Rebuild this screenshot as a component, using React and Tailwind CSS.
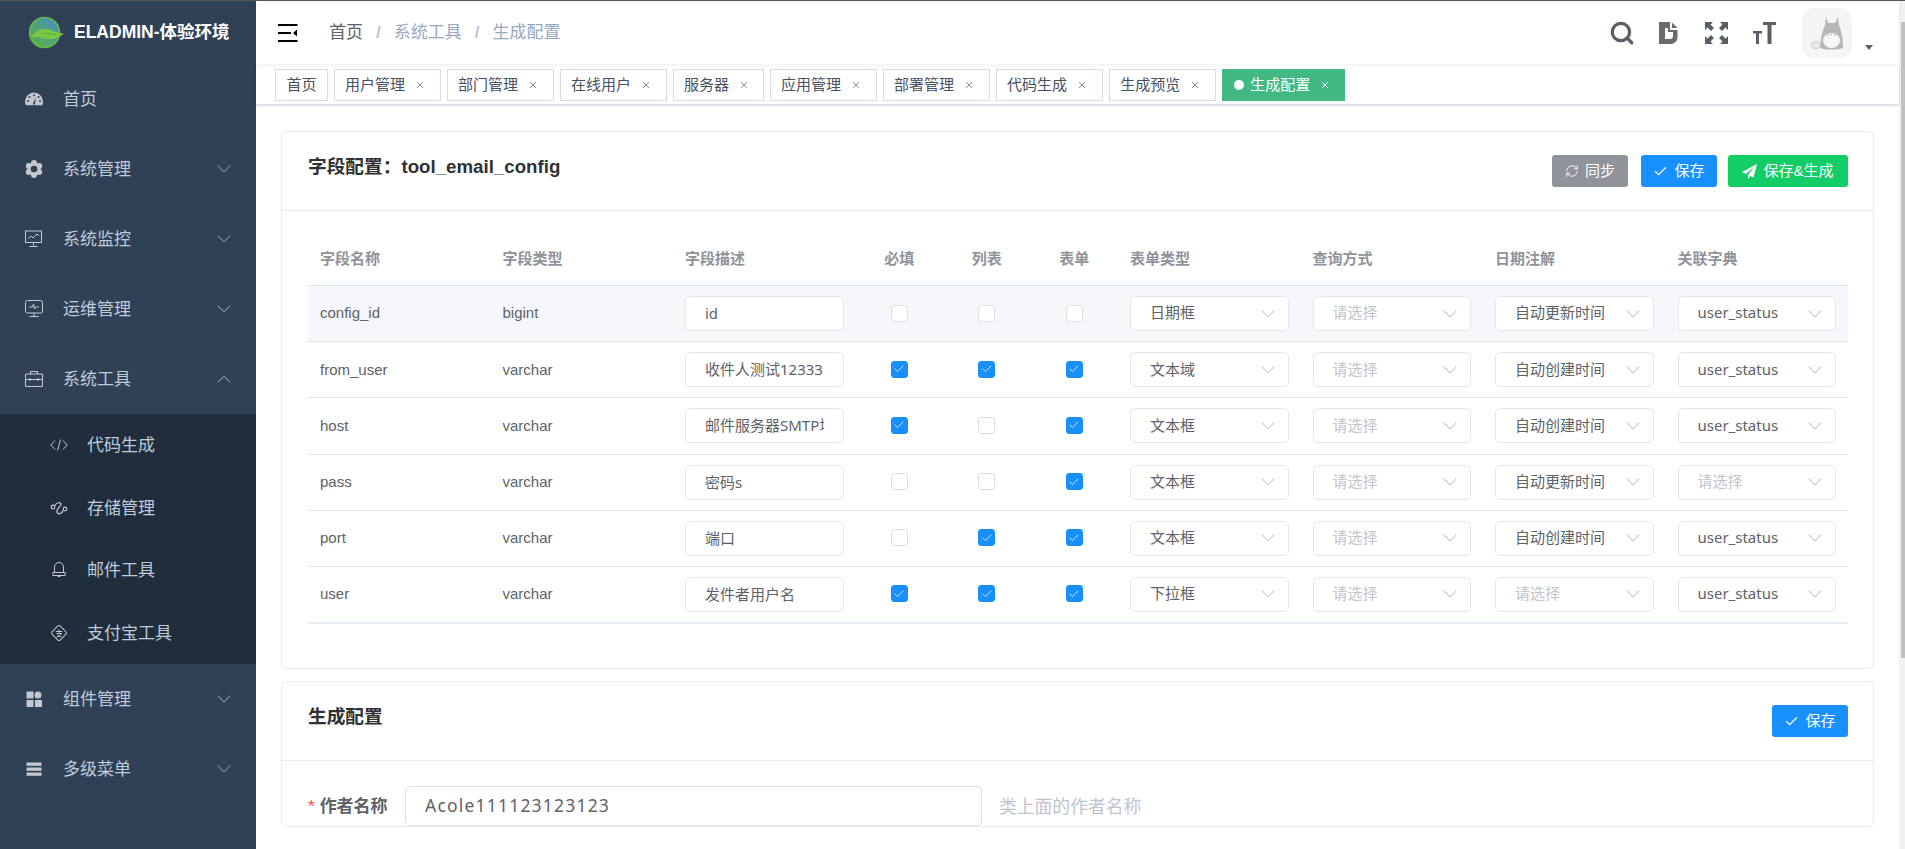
import React from 'react';
import { Check, RefreshCw, Search } from 'lucide-react';

const Chevron = ({ up, className = '' }) => (
  <svg width="14" height="8" viewBox="0 0 12 7" fill="none" stroke="currentColor" strokeWidth="0.9" className={className}>
    <path d={up ? 'M0.5 6.5 6 1l5.5 5.5' : 'M0.5 0.5 6 6l5.5-5.5'} />
  </svg>
);

const Logo = () => (
  <svg width="36" height="33" viewBox="0 0 36 33">
    <defs>
      <linearGradient id="ball" x1="0.9" y1="0.1" x2="0.2" y2="0.9">
        <stop offset="0" stopColor="#4a8fc0" />
        <stop offset="1" stopColor="#58b148" />
      </linearGradient>
    </defs>
    <circle cx="15.5" cy="16.5" r="15" fill="url(#ball)" stroke="#62bb46" strokeWidth="1.6" />
    <path d="M2 21c5-5 9-9 15-8 6 .8 10 3.800 18 4.500-5 3.500-9 6-16 5.500C13 22.500 9 20 2 21z" fill="#7ac943" />
    <path d="M13 17c5 .5 9 1.500 14 1.500" stroke="#4f9c35" strokeWidth="0.8" fill="none" />
  </svg>
);

const GaugeIcon = () => (
  <svg width="18" height="18" viewBox="0 0 18 18">
    <path d="M9 2.500a9 9 0 0 0-9 9c0 1.500.3 2.700.9 3.700h16.200c.6-1 .9-2.200.9-3.700a9 9 0 0 0-9-9z" fill="currentColor" />
    <g fill="#304156">
      <circle cx="4.500" cy="7" r="1" />
      <circle cx="9" cy="5.200" r="1" />
      <circle cx="13.500" cy="7" r="1" />
      <circle cx="3" cy="11" r="1" />
      <circle cx="15" cy="11" r="1" />
      <path d="M8 13.500 10.800 7.500l-.8 6.300a1 1 0 0 1-2-.3z" />
    </g>
  </svg>
);

const GearIcon = () => (
  <svg width="18" height="18" viewBox="0 0 18 18">
    <g fill="currentColor">
      <circle cx="9" cy="9" r="6.500" />
      <circle cx="9" cy="3" r="3" />
      <circle cx="9" cy="15" r="3" />
      <circle cx="3.800" cy="6" r="3" />
      <circle cx="14.200" cy="6" r="3" />
      <circle cx="3.800" cy="12" r="3" />
      <circle cx="14.200" cy="12" r="3" />
    </g>
    <circle cx="9" cy="9" r="3.300" fill="#304156" />
  </svg>
);

const ChartIcon = () => (
  <svg width="18" height="18" viewBox="0 0 18 18" fill="none" stroke="currentColor" strokeWidth="1">
    <rect x="0.500" y="1" width="16" height="11.500" />
    <path d="M3 9l3-3 2 2 4-4 2 2M8.500 12.500v3M4.500 16.500h8" />
  </svg>
);

const ScreenIcon = () => (
  <svg width="18" height="18" viewBox="0 0 18 18" fill="none" stroke="currentColor" strokeWidth="1">
    <rect x="0.500" y="0.500" width="17" height="12.500" rx="2" />
    <path d="M4 7h3.500l1-3 1 5 1-2H14M9 13v3M4.500 16.500h9" />
  </svg>
);

const ToolboxIcon = () => (
  <svg width="18" height="18" viewBox="0 0 18 18" fill="none" stroke="currentColor" strokeWidth="1.100">
    <rect x="0.500" y="4" width="17" height="12.500" rx="1" />
    <path d="M5.500 4V1.500h7V4M0.500 9.500h17M5 8v3M13 8v3" />
  </svg>
);

const CodeIcon = () => (
  <svg width="18" height="18" viewBox="0 0 18 18" fill="none" stroke="currentColor" strokeWidth="1">
    <path d="M5 4.500.8 9 5 13.500M13 4.500 17.200 9 13 13.500M10.500 3.500l-3 11" />
  </svg>
);

const StorageIcon = () => (
  <svg width="18" height="18" viewBox="0 0 18 18" fill="none" stroke="currentColor" strokeWidth="1.200">
    <circle cx="3" cy="8" r="1.800" />
    <circle cx="15" cy="10" r="1.800" />
    <path d="M4.500 7c2-4 6-4 6.500-2s-5 5-4 8 5 2 6-1.500" />
  </svg>
);

const BellIcon = () => (
  <svg width="18" height="18" viewBox="0 0 18 18" fill="none" stroke="currentColor" strokeWidth="1">
    <path d="M9 1.500C6.200 1.500 4.500 3.700 4.500 6V11.500H13.500V6C13.500 3.700 11.800 1.500 9 1.500zM2.800 11.500h12.400M2.800 14.500h12.400M2.800 11.500v3M15.200 11.500v3M7 14.500c0 1.500 4 1.500 4 0" />
  </svg>
);

const AlipayIcon = () => (
  <svg width="18" height="18" viewBox="0 0 18 18" fill="none" stroke="currentColor" strokeWidth="1">
    <rect x="3.200" y="3.200" width="11.600" height="11.600" rx="2" transform="rotate(45 9 9)" />
    <path d="M5.800 7.500h6.400M9 5.500v3M6.500 9.500h5c-.5 2-3 3.500-5 3.500M7.500 10.500c1 1.500 2.500 2 4 2.500" />
  </svg>
);

const GridIcon = () => (
  <svg width="18" height="18" viewBox="0 0 18 18" fill="currentColor">
    <rect x="1.500" y="1.500" width="7" height="7" />
    <circle cx="13" cy="5" r="3.500" />
    <rect x="1.500" y="10" width="7" height="7" />
    <rect x="10" y="10" width="7" height="7" />
  </svg>
);

const ListIcon = () => (
  <svg width="18" height="18" viewBox="0 0 18 18" fill="currentColor">
    <rect x="1.500" y="2.500" width="15" height="3.300" />
    <rect x="1.500" y="7.500" width="15" height="3.300" />
    <rect x="1.500" y="12.500" width="15" height="3.300" />
  </svg>
);

const Hamburger = () => (
  <svg width="20" height="18" viewBox="0 0 20 18" fill="#000">
    <rect x="0" y="0" width="19.500" height="2" />
    <rect x="0" y="8" width="13" height="2" />
    <rect x="0" y="16" width="19.500" height="2" />
    <path d="M15 9l4-3.500v7z" />
  </svg>
);

const DocIcon = () => (
  <svg width="19" height="22" viewBox="0 0 19 22" fill="#6b6b6b">
    <path fillRule="evenodd" d="M0 0H11V8H18.500V15C18.500 19 15.500 22 11.500 22H0zM6 6V17H11C13 17 14 15.800 14 14V10H9V6z" />
    <path d="M13 0.500 18.500 6H13z" />
  </svg>
);

const FullIcon = () => (
  <svg width="23" height="22" viewBox="0 0 23 22" fill="#5a5e66">
    <path d="M0 0H8L5.500 2.500 9 6 6 9 2.500 5.500 0 8z" />
    <path d="M23 0H15L17.500 2.500 14 6 17 9 20.500 5.500 23 8z" />
    <path d="M0 22H8L5.500 19.500 9 16 6 13 2.500 16.500 0 14z" />
    <path d="M23 22H15L17.500 19.500 14 16 17 13 20.500 16.500 23 14z" />
  </svg>
);

const SizeIcon = () => (
  <svg width="23" height="22" viewBox="0 0 23 22" fill="#5a5e66">
    <rect x="10" y="0" width="13" height="3" />
    <rect x="14.500" y="0" width="4" height="22" />
    <rect x="0" y="9" width="9" height="2.500" />
    <rect x="3" y="9" width="3" height="13" />
  </svg>
);

// the little grey totoro in the avatar
const Totoro = () => (
  <svg width="50" height="50" viewBox="0 0 50 50" className="blur-[0.5px]">
    <path d="M24 9l2 6h7l3-6 1 8c3 7 4 15 4 23-5 2-18 2-23 0 0-8 2-16 5-23z" fill="#b7b7b7" />
    <ellipse cx="29.500" cy="32.500" rx="8.500" ry="7.500" fill="#f8f8f8" />
    <g fill="#999">
      <circle cx="26" cy="27" r="0.700" />
      <circle cx="29.500" cy="26.500" r="0.700" />
      <circle cx="33" cy="27" r="0.700" />
    </g>
    <ellipse cx="14" cy="37" rx="4.500" ry="3.500" fill="#e8e8e8" stroke="#c4c4c4" strokeWidth="0.8" />
  </svg>
);

const menu = [
  { label: '首页', Icon: GaugeIcon },
  { label: '系统管理', Icon: GearIcon, arrow: true },
  { label: '系统监控', Icon: ChartIcon, arrow: true },
  { label: '运维管理', Icon: ScreenIcon, arrow: true },
  { label: '系统工具', Icon: ToolboxIcon, arrow: true, open: true },
];

const subMenu = [
  { label: '代码生成', Icon: CodeIcon },
  { label: '存储管理', Icon: StorageIcon },
  { label: '邮件工具', Icon: BellIcon },
  { label: '支付宝工具', Icon: AlipayIcon },
];

const menuAfter = [
  { label: '组件管理', Icon: GridIcon, arrow: true },
  { label: '多级菜单', Icon: ListIcon, arrow: true },
];

const MenuItem = ({ label, Icon, arrow, open }) => (
  <div className="h-[70px] flex items-center pl-[25px] pr-[25px] text-[17px] text-[#bfcbd9]">
    <span className="w-[38px] text-[#c4c8ce]">
      <Icon />
    </span>
    <span className="flex-1 mt-[2px]">{label}</span>
    {arrow && <Chevron up={open} className="text-[#8492a3]" />}
  </div>
);

const Sidebar = () => (
  <aside className="w-[256px] shrink-0 bg-[#304156]">
    <div className="h-[63px] flex items-center pl-[29px]">
      <Logo />
      <h1 className="ml-[9px] text-[17.500px] font-bold text-white whitespace-nowrap">ELADMIN-体验环境</h1>
    </div>
    {menu.map((item) => (
      <MenuItem key={item.label} {...item} />
    ))}
    <div className="bg-[#1f2d3d]">
      {subMenu.map(({ label, Icon }) => (
        <div key={label} className="h-[62.500px] flex items-center pl-[50px] text-[17px] text-[#bfcbd9]">
          <span className="w-[37px] text-[#c4c8ce]">
            <Icon />
          </span>
          <span className="mt-[1px]">{label}</span>
        </div>
      ))}
    </div>
    {menuAfter.map((item) => (
      <MenuItem key={item.label} {...item} />
    ))}
  </aside>
);

const Navbar = () => (
  <header className="h-[63px] flex items-center bg-white shadow-[0_1px_4px_rgba(0,21,41,0.08)] relative z-20">
    <div className="ml-[22px]">
      <Hamburger />
    </div>
    <nav className="ml-[31px] flex items-center text-[17px] text-[#97a8be]">
      <span className="text-[#606266]">首页</span>
      <span className="mx-[13px] font-bold text-[#c0c4cc]">/</span>
      <span>系统工具</span>
      <span className="mx-[13px] font-bold text-[#c0c4cc]">/</span>
      <span>生成配置</span>
    </nav>
    <div className="ml-auto flex items-center">
      <Search size={26} strokeWidth={3} className="text-[#5a5e66]" />
      <span className="ml-[24px]">
        <DocIcon />
      </span>
      <span className="ml-[27px]">
        <FullIcon />
      </span>
      <span className="ml-[25px]">
        <SizeIcon />
      </span>
      <div className="ml-[26px] w-[50px] h-[50px] rounded-[12px] bg-[#f5f5f5] overflow-hidden">
        <Totoro />
      </div>
      <div className="ml-[13px] mr-[26px] mt-[30px] w-0 h-0 border-x-[4.500px] border-x-transparent border-t-[5px] border-t-[#5a5e66]" />
    </div>
  </header>
);

const tags = ['用户管理', '部门管理', '在线用户', '服务器', '应用管理', '部署管理', '代码生成', '生成预览'];

const CloseX = () => (
  <span className="w-[16px] ml-[7px] flex justify-center">
    <svg width="8" height="8" viewBox="0 0 8 8" stroke="currentColor" strokeWidth="1">
      <path d="M1 1l6 6M7 1 1 7" />
    </svg>
  </span>
);

const TagsBar = () => (
  <div className="h-[41px] flex items-start gap-[6px] pl-[19px] pt-[5px] bg-white text-[15px] border-b border-[#d8dce5] shadow-[0_1px_3px_0_rgba(0,0,0,0.12),0_0_3px_0_rgba(0,0,0,0.04)] relative z-10">
    <div className="h-[32px] px-[10.500px] flex items-center border border-[#d8dce5] text-[#495060]">首页</div>
    {tags.map((t) => (
      <div key={t} className={`h-[32px] pl-[10px] flex items-center border border-[#d8dce5] text-[#495060] ${t.length === 3 ? 'pr-[11px]' : 'pr-[12px]'}`}>
        {t}
        <span className="text-[#8a8f99]">
          <CloseX />
        </span>
      </div>
    ))}
    <div className="h-[32px] pl-[11px] pr-[11px] flex items-center border border-[#42b983] bg-[#42b983] text-white">
      <span className="w-[10px] h-[10px] rounded-full bg-white mr-[6px]" />
      生成配置
      <CloseX />
    </div>
  </div>
);

const Button = ({ color, Icon, children }) => (
  <button className={`h-[32px] flex items-center justify-center gap-[6px] rounded-[3px] text-[15px] text-white ${color}`}>
    {Icon}
    {children}
  </button>
);

const CheckIcon = <Check size={15} strokeWidth={2} />;
const SendIcon = (
  <svg width="15" height="15" viewBox="0 0 15 15" fill="currentColor">
    <path d="M15 0 0 8l4 2 8-7-6 8v4l2.500-3 3 1.500z" />
  </svg>
);

const selectPlaceholder = '请选择';
const rows = [
  ['config_id', 'bigint', 'id', [0, 0, 0], '日期框', '', '自动更新时间', 'user_status'],
  ['from_user', 'varchar', '收件人测试12333', [1, 1, 1], '文本域', '', '自动创建时间', 'user_status'],
  ['host', 'varchar', '邮件服务器SMTP地址', [1, 0, 1], '文本框', '', '自动创建时间', 'user_status'],
  ['pass', 'varchar', '密码s', [0, 0, 1], '文本框', '', '自动更新时间', ''],
  ['port', 'varchar', '端口', [0, 1, 1], '文本框', '', '自动创建时间', 'user_status'],
  ['user', 'varchar', '发件者用户名', [1, 1, 1], '下拉框', '', '', 'user_status'],
];

const headers = ['字段名称', '字段类型', '字段描述', '必填', '列表', '表单', '表单类型', '查询方式', '日期注解', '关联字典'];

const CheckBox = ({ on }) => (
  <span
    className={`mb-[1px] w-[17px] h-[17px] rounded-[3px] border flex items-center justify-center ${
      on ? 'bg-[#1890ff] border-[#1890ff] text-white' : 'bg-white border-[#dcdfe6]'
    }`}
  >
    {on ? <Check size={12} strokeWidth={1.500} /> : null}
  </span>
);

const Select = ({ value }) => (
  <div className={`w-full h-[35px] pl-[19px] pr-[13px] flex items-center justify-between bg-white border border-[#e4e7ed] rounded-[5px] text-[15px] font-[Noto_Sans,Noto_Sans_CJK_SC,sans-serif] ${value ? 'text-[#606266]' : 'text-[#c0c4cc]'}`}>
    <span className="whitespace-nowrap mb-[2px]">{value || selectPlaceholder}</span>
    <Chevron className="text-[#c0c4cc]" />
  </div>
);

const cell = 'px-[12px] flex items-center';
const gridCols = 'grid grid-cols-[repeat(3,182.500px)_repeat(3,87.500px)_repeat(4,182.500px)]';

const FieldTable = () => (
  <div className="w-[1540px] border-b-2 border-[#e6ebf5] text-[15px] text-[#606266]">
    <div className={`${gridCols} h-[51px] pb-[2px] border-b border-[#dfe6ec] font-bold text-[#909399]`}>
      {headers.map((h, i) => (
        <div key={h} className={`${cell} ${i >= 3 && i <= 5 ? 'justify-center' : ''}`}>
          {h}
        </div>
      ))}
    </div>
    {rows.map((r, i) => (
      <div key={r[0]} className={`${gridCols} h-[56.200px] last:h-[55px] border-b border-[#dfe6ec] last:border-b-0 ${i === 0 ? 'bg-[#f5f7fa]' : ''}`}>
        <div className={cell}>{r[0]}</div>
        <div className={cell}>{r[1]}</div>
        <div className={cell}>
          <input
            readOnly
            value={r[2]}
            className="w-full h-[35px] pl-[19px] pr-[19px] pb-[2px] bg-white border border-[#e4e7ed] rounded-[5px] text-[15px] text-[#606266] outline-none font-[Noto_Sans,Noto_Sans_CJK_SC,sans-serif]"
          />
        </div>
        {r[3].map((on, j) => (
          <div key={j} className={`${cell} justify-center`}>
            <CheckBox on={on === 1} />
          </div>
        ))}
        {[4, 5, 6, 7].map((k) => (
          <div key={k} className={cell}>
            <Select value={r[k]} />
          </div>
        ))}
      </div>
    ))}
  </div>
);

const Card = ({ title, actions, children, className = '' }) => (
  <section className={`bg-white border border-[#e6ebf5] rounded-[5px] ${className}`}>
    <div className="h-[79px] pl-[26px] pr-[25px] flex justify-between items-center border-b border-[#e6ebf5]">
      <h2 className="text-[18.700px] font-bold text-[#303133] -mt-[8px]">{title}</h2>
      <div className="flex items-center">{actions}</div>
    </div>
    {children}
  </section>
);

const App = () => (
  <div className="h-[849px] flex overflow-hidden border-t border-[#555] bg-white font-[Liberation_Sans,Noto_Sans_CJK_SC,sans-serif]">
    <Sidebar />
    <main className="flex-1 min-w-0 flex flex-col">
      <Navbar />
      <TagsBar />
      <div className="flex-1 min-h-0 overflow-hidden px-[25px] pt-[26px]">
        <Card
          title="字段配置：tool_email_config"
          className="h-[538px]"
          actions={
            <>
              <Button color="w-[76px] bg-[#909399]" Icon={<RefreshCw size={14} strokeWidth={1.500} />}>同步</Button>
              <Button color="w-[76px] bg-[#1890ff] ml-[13px]" Icon={CheckIcon}>保存</Button>
              <Button color="w-[120px] bg-[#13ce66] ml-[11px]" Icon={SendIcon}>保存&amp;生成</Button>
            </>
          }
        >
          <div className="pl-[26px] pt-[24px]">
            <FieldTable />
          </div>
        </Card>
        <Card
          title="生成配置"
          className="mt-[12px]"
          actions={<Button color="w-[76px] bg-[#1890ff]" Icon={CheckIcon}>保存</Button>}
        >
          <div className="pl-[26px] pt-[25px] flex items-center">
            <label className="w-[97px] mt-[2px] text-[17px] font-bold text-[#606266] whitespace-nowrap">
              <span className="text-[#ff4949] font-normal mr-[5px]">*</span>作者名称
            </label>
            <input
              readOnly
              value="Acole111123123123"
              className="w-[577px] h-[40px] pl-[19px] pr-[19px] pb-[2px] border border-[#dcdfe6] rounded-[5px] text-[17.500px] tracking-[1.200px] text-[#606266] outline-none font-[Noto_Sans,Noto_Sans_CJK_SC,sans-serif]"
            />
            <span className="ml-[17px] mt-[2px] text-[17.800px] text-[#c0c4cc]">类上面的作者名称</span>
          </div>
        </Card>
      </div>
    </main>
    <div className="w-[6px] shrink-0 bg-[#f1f1f1] pt-[21px] pl-[2px]">
      <div className="h-[636px] bg-[#c1c1c1]" />
    </div>
  </div>
);

export default App;
